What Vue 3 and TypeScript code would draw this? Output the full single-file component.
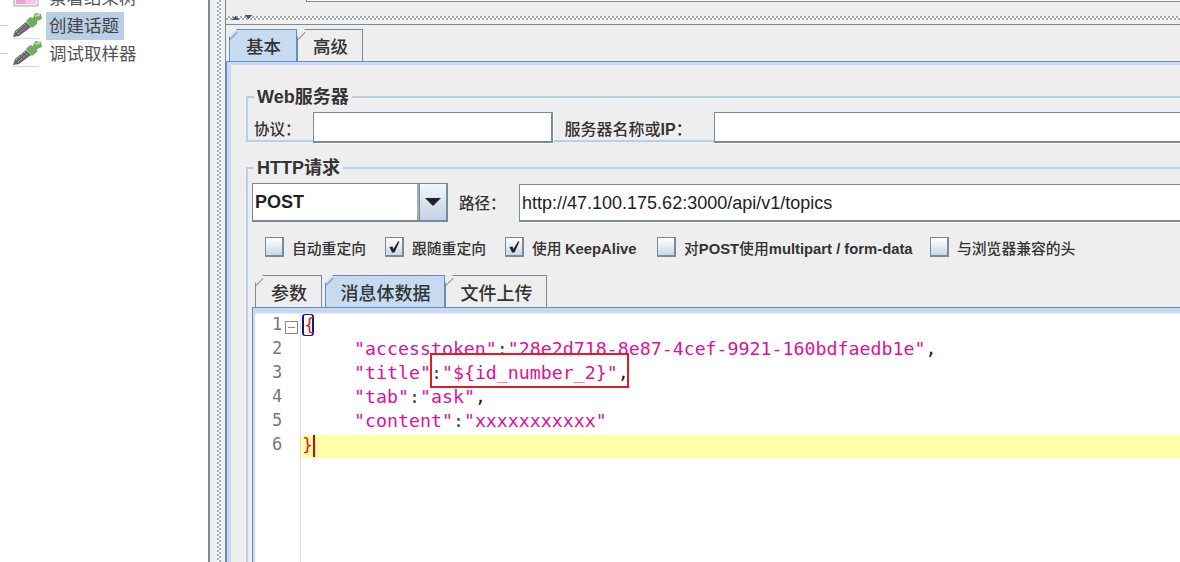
<script setup lang="ts">
interface Check { prefix: string; latin?: string; suffix?: string; tail?: string; on: boolean; width: number }
const checks: Check[] = [
  { prefix: '自动重定向', on: false, width: 120 },
  { prefix: '跟随重定向', on: true, width: 120 },
  { prefix: '使用 ', latin: 'KeepAlive', on: true, width: 152 },
  { prefix: '对', latin: 'POST', suffix: '使用', tail: 'multipart / form-data', on: false, width: 273 },
  { prefix: '与浏览器兼容的头', on: false, width: 150 },
]
const lineNumbers = [1, 2, 3, 4, 5, 6]
</script>

<template>
  <div class="app">
    <aside class="tree">
      <div class="row clipped">
        <svg class="icon" viewBox="0 0 30 28"><rect x="2" y="0" width="24" height="22" fill="#eee" stroke="#aaa"/><path d="M4 20 L4 8 L12 4 L14 20Z" fill="#f0a0dc"/><circle cx="17" cy="8" r="6" fill="#8fa8e8"/><path d="M14 14h10v6H14z" fill="#f6c6e6"/></svg>
        <span class="label">察看结果树</span>
      </div>
      <div class="row">
        <i class="branch"></i>
        <svg class="icon" viewBox="0 0 30 28">
          <path d="M1 26.5 L27 26.5" stroke="#ddd" stroke-width="1.5"/>
          <path d="M1 25 L3 19 L14 10 L19 15 L7 24Z" fill="#666"/>
          <path d="M4 20 L13 12 M6 22 L15 14" stroke="#c4c4c4" stroke-width="1" stroke-dasharray="2 1.5"/>
          <path d="M14 9 L18 5 L21 6 L23 1 L29 2 L30 7 L25 9 L25 12 L20 16Z" fill="#6fae5c"/>
          <path d="M23 4 L28 3" stroke="#b4dca4" stroke-width="2"/>
        </svg>
        <span class="label selected">创建话题</span>
      </div>
      <div class="row">
        <i class="branch"></i>
        <svg class="icon" viewBox="0 0 30 28">
          <path d="M1 26.5 L27 26.5" stroke="#ddd" stroke-width="1.5"/>
          <path d="M1 25 L3 19 L14 10 L19 15 L7 24Z" fill="#666"/>
          <path d="M4 20 L13 12 M6 22 L15 14" stroke="#c4c4c4" stroke-width="1" stroke-dasharray="2 1.5"/>
          <path d="M14 9 L18 5 L21 6 L23 1 L29 2 L30 7 L25 9 L25 12 L20 16Z" fill="#6fae5c"/>
          <path d="M23 4 L28 3" stroke="#b4dca4" stroke-width="2"/>
        </svg>
        <span class="label">调试取样器</span>
      </div>
    </aside>

    <div class="vsplit"><i class="dots"></i></div>

    <main class="main">
      <div class="top"><div class="top-field"></div></div>
      <div class="hsplit">
        <svg class="arrows" width="21" height="6" viewBox="0 0 21 6"><path d="M0 5.5h7M1 4.5h5M2 3.5h3M3 2.5h1" stroke="#3a5a9a"/><path d="M13 1.5h7M14 2.5h5M15 3.5h3M16 4.5h1" stroke="#3a5a9a"/></svg>
      </div>

      <nav class="tabs outer">
        <div class="tab active w-basic">基本</div>
        <div class="tab w-adv">高级</div>
      </nav>

      <section class="panel">
        <fieldset class="group web">
          <legend>Web服务器</legend>
          <div class="web-row">
            <label class="cap">协议：</label>
            <div class="field proto"></div>
            <label class="cap server">服务器名称或<b>IP</b>：</label>
            <div class="field grow"></div>
          </div>
        </fieldset>

        <fieldset class="group http">
          <legend>HTTP请求</legend>
          <div class="http-row">
            <div class="combo">
              <div class="combo-text">POST</div>
              <div class="combo-btn"><i class="tri"></i></div>
            </div>
            <label class="cap path">路径：</label>
            <div class="field grow url">http://47.100.175.62:3000/api/v1/topics</div>
          </div>

          <div class="checks">
            <div v-for="c in checks" :key="c.prefix" class="check" :style="{ width: c.width + 'px' }">
              <span class="box">
                <svg v-if="c.on" width="14" height="14" viewBox="0 0 14 14"><path d="M2.5 7 L5.5 6.5 L6.5 9 L11 1.5 L12.5 1.5 L7.5 12.5 L5 12.5Z" fill="#222"/></svg>
              </span>
              <span class="check-label">{{ c.prefix }}<b v-if="c.latin">{{ c.latin }}</b>{{ c.suffix }}<b v-if="c.tail">{{ c.tail }}</b></span>
            </div>
          </div>

          <nav class="tabs inner">
            <div class="tab w-a">参数</div>
            <div class="tab active w-b">消息体数据</div>
            <div class="tab w-c">文件上传</div>
          </nav>

          <div class="editor-frame">
            <div class="editor">
              <div class="gutter">
                <div v-for="n in lineNumbers" :key="n" class="num">{{ n }}</div>
                <span class="fold"></span>
              </div>
              <div class="code">
                <div class="line"><span class="brace match">{</span></div>
                <div class="line ind"><span class="s">"accesstoken"</span><span class="p">:</span><span class="s">"28e2d718-8e87-4cef-9921-160bdfaedb1e"</span><span class="k">,</span></div>
                <div class="line ind"><span class="s">"title"</span><span class="p">:</span><span class="s">"${id_number_2}"</span><span class="k">,</span></div>
                <div class="line ind"><span class="s">"tab"</span><span class="p">:</span><span class="s">"ask"</span><span class="k">,</span></div>
                <div class="line ind"><span class="s">"content"</span><span class="p">:</span><span class="s">"xxxxxxxxxxx"</span></div>
                <div class="line current"><span class="brace">}</span><i class="caret"></i></div>
              </div>
            </div>
          </div>
        </fieldset>
      </section>

      <div class="annotation"></div>
    </main>
  </div>
</template>

<style>
html, body { margin: 0; background: #fff; overflow: hidden; }
</style>

<style scoped>
* { box-sizing: border-box; }
.app {
  width: 1180px; height: 562px; display: flex; overflow: hidden;
  font-family: "Liberation Sans", "Noto Sans CJK SC", sans-serif; color: #333;
}
.tree { width: 208px; flex: none; background: #fff; margin-top: -16px; }
.row { height: 28px; display: flex; align-items: center; padding-left: 12px; position: relative; }
.branch { position: absolute; left: 0; top: 13px; width: 8px; height: 1px; background: #b8cfe5; }
.icon { width: 30px; height: 28px; flex: none; margin-right: 4px; }
.label { font-size: 17.5px; color: #555; height: 28px; line-height: 26px; padding: 0 5px 0 3px; white-space: nowrap; font-family: "Noto Sans CJK SC", sans-serif; }
.selected { background: #b8cfe5; color: #444; }
.vsplit { width: 18px; flex: none; background: #eee; border-left: 2px solid #7a8a99; border-right: 1px solid #7a8a99; padding-left: 7px; }
.dots { display: block; width: 4px; height: 100%; background: repeating-conic-gradient(#b0b0b0 0 25%, #fff 0 50%) 0 0 / 4px 4px; }
.main { flex: 1; min-width: 0; background: #eee; position: relative; }
.top { height: 12px; padding-left: 80px; }
.top-field { height: 3px; background: #fff; border-bottom: 1px solid #7a8a99; margin-top: -1px; border-left: 1px solid #7a8a99; }
.hsplit { height: 14px; background: #eee repeating-conic-gradient(#a8a8a8 0 25%, #fff 0 50%) 0 5px / 4px 4px repeat-x; border-bottom: 1px solid #7a8a99; padding: 3px 0 0 6px; }
.arrows { display: block; }
.tabs { display: flex; align-items: flex-end; }
.outer { padding: 0 0 0 3px; height: 36px; }
.tab {
  height: 32px; display: flex; align-items: center; justify-content: center; padding-left: 2px;
  font-family: "Noto Sans CJK SC", sans-serif; font-size: 17.5px; font-weight: 500; color: #333;
  border: 1px solid #7a8a99; border-bottom: 0; border-left: 0;
  clip-path: polygon(8px 0, 100% 0, 100% 100%, 0 100%, 0 8px);
  position: relative; background: #eee;
}
.tab::before { content: ""; position: absolute; left: 0; top: 0; width: 1px; height: 100%; background: #7a8a99; }
.tab::after { content: ""; position: absolute; left: -2px; top: 6px; width: 12px; height: 1px; background: #7a8a99; transform: rotate(-45deg); }
.tab.active { background: #c6daf0; border-color: #6a8ac8; }
.tab.active::before, .tab.active::after { background: #6a8ac8; }
.w-basic { width: 68px; }
.w-adv { width: 66px; }
.w-a { width: 67px; }
.w-b { width: 120px; margin-left: 3px; }
.w-c { width: 102px; }
.panel { height: 510px; border-top: 1px solid #6a8ac8; border-left: 1px solid #6a8ac8; box-shadow: inset 4px 0 0 #c6daf0, inset 0 3px 0 #c6daf0; padding: 25px 0 0 19px; }
.group { margin: 0 -2px 0 0; padding: 0; border: 2px solid #b8cfe5; border-right: 0; min-width: 0; }
.group legend { margin-left: 6px; padding: 0 3px 0 3px; font-size: 18px; font-weight: 700; color: #333; line-height: 20px; }
.web { height: 55px; }
.web-row { display: flex; align-items: center; height: 31px; margin: 5px 0 0 6px; }
.cap { font-family: "Noto Sans CJK SC", sans-serif; font-size: 15.5px; font-weight: 500; color: #333; white-space: nowrap; }
.cap b { font-family: "Liberation Sans", sans-serif; }
.field { height: 31px; background: #fff; border: 1px solid #7a8a99; border-width: 1px 0 2px 1px; box-shadow: 0 1px 0 #fff; }
.proto { width: 240px; margin-left: 12px; border-right: 2px solid #7a8a99; flex: none; box-shadow: 1px 1px 0 #fff; }
.server { margin-left: 12px; width: 149px; font-size: 16px; }
.grow { flex: 1; min-width: 0; }
.http { margin-top: 16px; height: 420px; }
.http-row { display: flex; align-items: center; height: 39px; margin: 5px 0 0 4px; }
.combo { width: 196px; height: 39px; display: flex; flex: none; border: 2px solid #7a8a99; border-width: 1px 2px 2px 1px; background: #fff; }
.combo-text { flex: 1; font-size: 18px; font-weight: 700; color: #222; padding-left: 2px; line-height: 37px; border-right: 2px solid #9fb0c4; }
.combo-btn { width: 27px; display: flex; align-items: center; justify-content: center; background: linear-gradient(#f2f6fb, #c2d2e6); border-left: 1px solid #7a8a99; }
.tri { border: 7px solid transparent; border-top: 8px solid #222; border-bottom: 0; border-left-width: 8px; border-right-width: 8px; }
.path { margin-left: 11px; width: 60px; line-height: 20px; padding-bottom: 2px; }
.url { font-size: 18px; color: #222; line-height: 37px; padding-left: 2px; height: 38px; white-space: nowrap; }
.checks { display: flex; height: 20px; margin: 15px 0 0 17px; }
.check { display: flex; align-items: center; flex: none; }
.box { width: 19px; height: 20px; flex: none; display: flex; align-items: center; justify-content: center; border: 1px solid #7a8a99; border-width: 1px 2px 2px 1px; background: linear-gradient(#fff, #c9d8ea); margin-right: 8px; }
.check-label { font-family: "Noto Sans CJK SC", sans-serif; font-size: 14.8px; font-weight: 500; color: #333; white-space: nowrap; }
.check-label b { font-family: "Liberation Sans", sans-serif; font-weight: 700; }
.inner { height: 32px; margin: 18px 0 0 7px; }
.inner .tab { height: 32px; font-size: 18px; }
.editor-frame { height: 300px; margin-left: 4px; border-top: 1px solid #6a8ac8; border-left: 1px solid #6a8ac8; padding: 6px 0 0 2px; box-shadow: inset 0 5px 0 #c6daf0, inset 2px 0 0 #c6daf0; }
.editor { display: flex; height: 100%; background: #fff; position: relative; }
.gutter { width: 46px; flex: none; border-right: 1px solid #ddd; position: relative; }
.num { height: 24px; line-height: 21px; text-align: left; padding-left: 17px; font-family: "DejaVu Sans Mono", monospace; font-size: 17px; color: #77777a; }
.fold { position: absolute; left: 30px; top: 7px; width: 13px; height: 13px; border: 1px solid #888; background: linear-gradient(#888, #888) center/7px 1px no-repeat; }
.code { flex: 1; min-width: 0; font-family: "DejaVu Sans Mono", monospace; font-size: 18.25px; white-space: pre; }
.line { height: 24px; line-height: 22px; padding-left: 1px; color: #222; }
.ind { padding-left: 53px; }
.s { color: #e0109a; }
.p { color: #444; }
.k { color: #222; }
.brace { color: #e02020; }
.match { display: inline-block; height: 22px; line-height: 19px; border: 1px solid #101a80; border-width: 1px 2px; border-radius: 3px; width: 12px; }
.current { background: #ffffaa; height: 23px; line-height: 20px; margin-top: 1px; }
.caret { display: inline-block; width: 2px; height: 22px; background: #e00000; vertical-align: top; }
.annotation { position: absolute; left: 204px; top: 353px; width: 199px; height: 35px; border: 2px solid #e31b23; pointer-events: none; }
</style>
